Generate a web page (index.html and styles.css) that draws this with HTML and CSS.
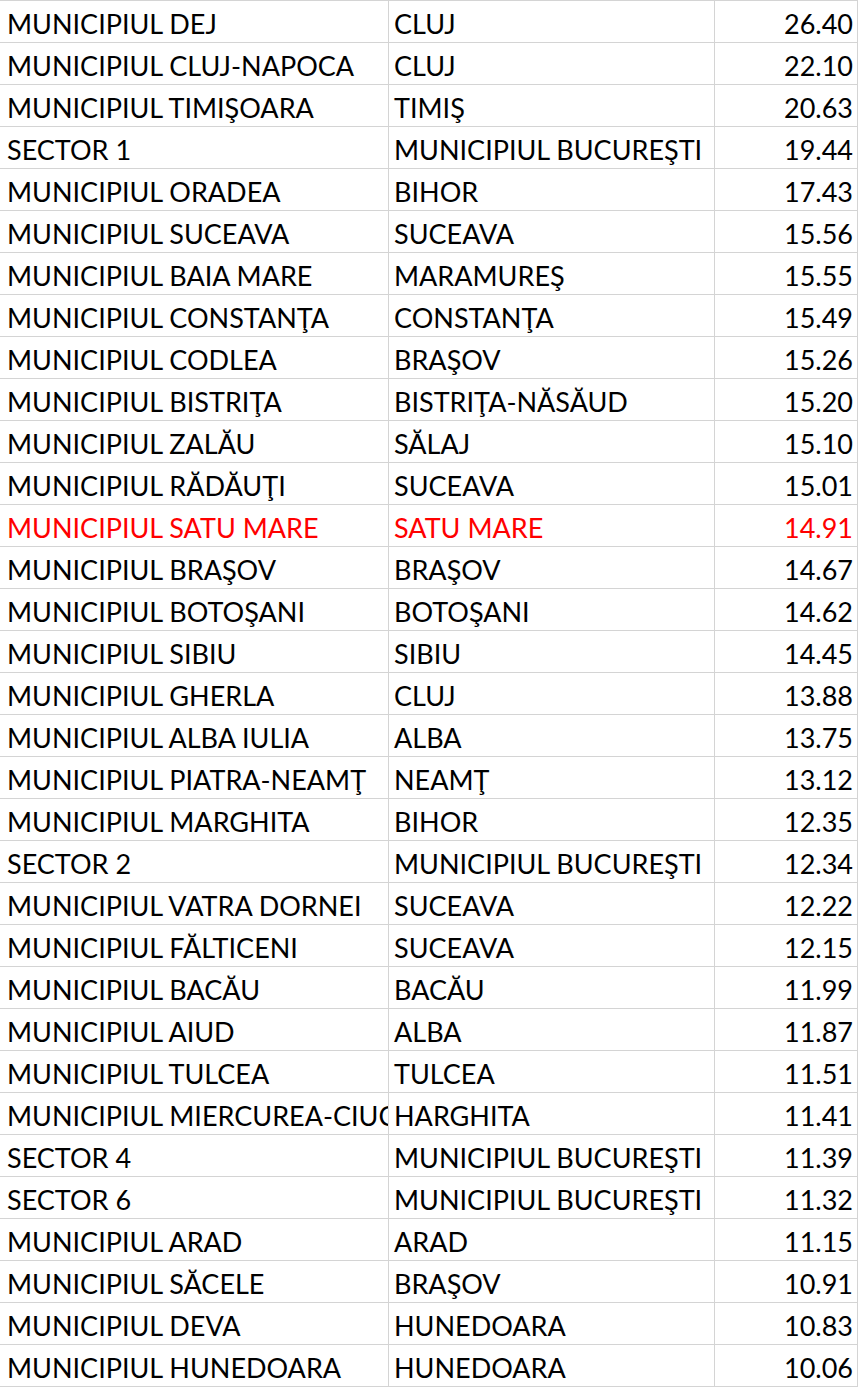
FILE: index.html
```html
<!DOCTYPE html>
<html lang="ro">
<head>
<meta charset="utf-8">
<title>Clasament</title>
<link rel="stylesheet" href="styles.css">
</head>
<body>
<div class="sheet">
  <div class="row"><div class="c name">MUNICIPIUL DEJ</div><div class="c county">CLUJ</div><div class="c num">26.40</div></div>
  <div class="row"><div class="c name">MUNICIPIUL CLUJ-NAPOCA</div><div class="c county">CLUJ</div><div class="c num">22.10</div></div>
  <div class="row"><div class="c name">MUNICIPIUL TIMIŞOARA</div><div class="c county">TIMIŞ</div><div class="c num">20.63</div></div>
  <div class="row"><div class="c name">SECTOR 1</div><div class="c county">MUNICIPIUL BUCUREŞTI</div><div class="c num">19.44</div></div>
  <div class="row"><div class="c name">MUNICIPIUL ORADEA</div><div class="c county">BIHOR</div><div class="c num">17.43</div></div>
  <div class="row"><div class="c name">MUNICIPIUL SUCEAVA</div><div class="c county">SUCEAVA</div><div class="c num">15.56</div></div>
  <div class="row"><div class="c name">MUNICIPIUL BAIA MARE</div><div class="c county">MARAMUREŞ</div><div class="c num">15.55</div></div>
  <div class="row"><div class="c name">MUNICIPIUL CONSTANŢA</div><div class="c county">CONSTANŢA</div><div class="c num">15.49</div></div>
  <div class="row"><div class="c name">MUNICIPIUL CODLEA</div><div class="c county">BRAŞOV</div><div class="c num">15.26</div></div>
  <div class="row"><div class="c name">MUNICIPIUL BISTRIŢA</div><div class="c county">BISTRIŢA-NĂSĂUD</div><div class="c num">15.20</div></div>
  <div class="row"><div class="c name">MUNICIPIUL ZALĂU</div><div class="c county">SĂLAJ</div><div class="c num">15.10</div></div>
  <div class="row"><div class="c name">MUNICIPIUL RĂDĂUŢI</div><div class="c county">SUCEAVA</div><div class="c num">15.01</div></div>
  <div class="row hl"><div class="c name">MUNICIPIUL SATU MARE</div><div class="c county">SATU MARE</div><div class="c num">14.91</div></div>
  <div class="row"><div class="c name">MUNICIPIUL BRAŞOV</div><div class="c county">BRAŞOV</div><div class="c num">14.67</div></div>
  <div class="row"><div class="c name">MUNICIPIUL BOTOŞANI</div><div class="c county">BOTOŞANI</div><div class="c num">14.62</div></div>
  <div class="row"><div class="c name">MUNICIPIUL SIBIU</div><div class="c county">SIBIU</div><div class="c num">14.45</div></div>
  <div class="row"><div class="c name">MUNICIPIUL GHERLA</div><div class="c county">CLUJ</div><div class="c num">13.88</div></div>
  <div class="row"><div class="c name">MUNICIPIUL ALBA IULIA</div><div class="c county">ALBA</div><div class="c num">13.75</div></div>
  <div class="row"><div class="c name">MUNICIPIUL PIATRA-NEAMŢ</div><div class="c county">NEAMŢ</div><div class="c num">13.12</div></div>
  <div class="row"><div class="c name">MUNICIPIUL MARGHITA</div><div class="c county">BIHOR</div><div class="c num">12.35</div></div>
  <div class="row"><div class="c name">SECTOR 2</div><div class="c county">MUNICIPIUL BUCUREŞTI</div><div class="c num">12.34</div></div>
  <div class="row"><div class="c name">MUNICIPIUL VATRA DORNEI</div><div class="c county">SUCEAVA</div><div class="c num">12.22</div></div>
  <div class="row"><div class="c name">MUNICIPIUL FĂLTICENI</div><div class="c county">SUCEAVA</div><div class="c num">12.15</div></div>
  <div class="row"><div class="c name">MUNICIPIUL BACĂU</div><div class="c county">BACĂU</div><div class="c num">11.99</div></div>
  <div class="row"><div class="c name">MUNICIPIUL AIUD</div><div class="c county">ALBA</div><div class="c num">11.87</div></div>
  <div class="row"><div class="c name">MUNICIPIUL TULCEA</div><div class="c county">TULCEA</div><div class="c num">11.51</div></div>
  <div class="row"><div class="c name">MUNICIPIUL MIERCUREA-CIUC</div><div class="c county">HARGHITA</div><div class="c num">11.41</div></div>
  <div class="row"><div class="c name">SECTOR 4</div><div class="c county">MUNICIPIUL BUCUREŞTI</div><div class="c num">11.39</div></div>
  <div class="row"><div class="c name">SECTOR 6</div><div class="c county">MUNICIPIUL BUCUREŞTI</div><div class="c num">11.32</div></div>
  <div class="row"><div class="c name">MUNICIPIUL ARAD</div><div class="c county">ARAD</div><div class="c num">11.15</div></div>
  <div class="row"><div class="c name">MUNICIPIUL SĂCELE</div><div class="c county">BRAŞOV</div><div class="c num">10.91</div></div>
  <div class="row"><div class="c name">MUNICIPIUL DEVA</div><div class="c county">HUNEDOARA</div><div class="c num">10.83</div></div>
  <div class="row"><div class="c name">MUNICIPIUL HUNEDOARA</div><div class="c county">HUNEDOARA</div><div class="c num">10.06</div></div>
</div>
</body>
</html>
```

FILE: styles.css
```css
html, body {
  margin: 0;
  padding: 0;
  background: #ffffff;
}

.sheet {
  width: 858px;
  border-top: 1px solid #d4d4d4;
  font-family: Lato, "Liberation Sans", sans-serif;
  font-size: 27px;
  color: #000000;
}

.row {
  display: grid;
  grid-template-columns: 388px 326px 144px;
  height: 42px;
  box-sizing: border-box;
  border-bottom: 1px solid #d4d4d4;
}

.c {
  display: flex;
  align-items: center;
  white-space: nowrap;
  overflow: hidden;
  padding-top: 3px;
  box-sizing: border-box;
}

.name {
  padding-left: 7px;
}

.county {
  border-left: 1px solid #d4d4d4;
  padding-left: 5px;
}

.num {
  border-left: 1px solid #d4d4d4;
  border-right: 1px solid #d4d4d4;
  justify-content: flex-end;
  padding-right: 4px;
}

.hl {
  color: #ff0000;
}
```
